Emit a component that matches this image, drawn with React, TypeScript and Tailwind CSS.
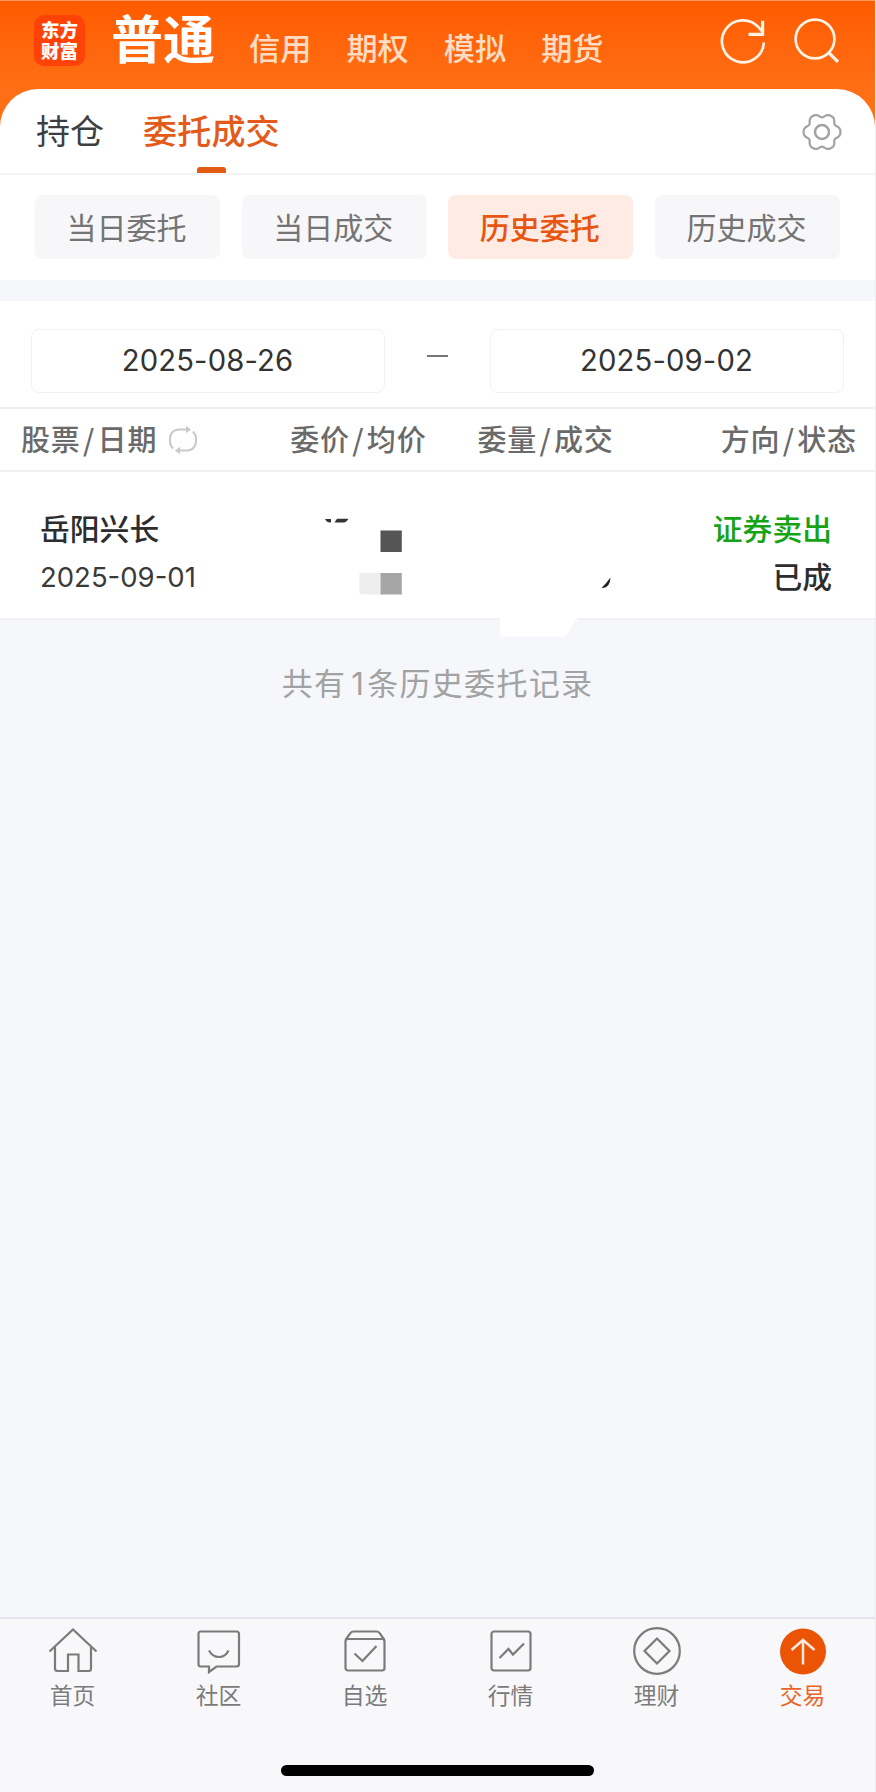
import React from "react";

const markets = ["信用", "期权", "模拟", "期货"];
const filters = ["当日委托", "当日成交", "历史委托", "历史成交"];

function RefreshIcon() {
  return (
    <svg className="h-12 w-12" viewBox="0 0 48 48" fill="none" stroke="#fff3e6" strokeWidth="2.7">
      <path d="M44.9 25.5A21 21 0 1 1 39.500 10.200L43.500 15" />
      <path d="M43.600 3.800v13.500H29.500" strokeWidth="3.200" />
    </svg>
  );
}

function SearchIcon() {
  return (
    <svg className="h-12 w-12" viewBox="0 0 48 48" fill="none" stroke="#fff3e6" strokeWidth="2.7">
      <circle cx="22" cy="22" r="19.400" />
      <path d="M35.500 35.500l9.500 9.300" strokeWidth="3.200" />
    </svg>
  );
}

// Six-lobed outline traced in polar coordinates around (20, 20).
const gearPoints = Array.from({ length: 144 }, (_, i) => {
  const t = (i / 144) * Math.PI * 2;
  const w = Math.cos(6 * t);
  const r = 16.9 + 1.9 * w - 0.35 * Math.cos(12 * t);
  return `${(20 + r * Math.cos(t)).toFixed(2)},${(20 + r * Math.sin(t)).toFixed(2)}`;
}).join(" ");

function GearIcon() {
  return (
    <svg className="h-10 w-10" viewBox="0 0 40 40" fill="none" stroke="#a3a3a3" strokeWidth="2.200" strokeLinejoin="round">
      <polygon points={gearPoints} />
      <circle cx="20" cy="20" r="7" strokeWidth="2.500" />
    </svg>
  );
}

function SwapIcon() {
  return (
    <svg className="h-[30px] w-[30px]" viewBox="0 0 30 30" fill="none" stroke="#c9c9c9" strokeWidth="2.100">
      <path d="M5 23.500Q2 20.500 2 17V13Q3 5 10.500 4.500H19" />
      <path d="M25 6.500Q28 9.500 28 13V17Q27 25 19.500 25.500H11" />
      <path d="M18 .8l5 3.700L18 8.200zM12 21.800l-5 3.700 5 3.700z" fill="#c9c9c9" stroke="none" />
    </svg>
  );
}

const navIcons: Record<string, React.ReactNode> = {
  首页: (
    <>
      <path d="M1.500 25.500L25 3.500l23.500 22" />
      <path d="M7 21v21.500q0 2.500 2.500 2.500H20V28.500h10.500V45H41q2 0 2-2.500V21" />
    </>
  ),
  社区: (
    <path d="M6.500 5.500h36q2.500 0 2.500 2.500v30q0 2.500-2.500 2.500H22.500l-7.500 5.500v-5.500H6.500Q4.500 40.500 4.500 38V8q0-2.500 2-2.500zM15 24.500q3.500 6.500 10 6.500t9.500-6.500" />
  ),
  自选: (
    <>
      <rect x="5.500" y="13" width="39" height="31.500" rx="2.500" />
      <path d="M5.500 14l5-7q1-1.500 3-1.500h23q2 0 3 1.500l5 7M14.500 27.500l8 7.500L36.500 20" />
    </>
  ),
  行情: (
    <>
      <rect x="5.500" y="5.500" width="39" height="39" rx="2.500" />
      <path d="M13.500 32l9-9 4.500 5.500L38 17.500" />
    </>
  ),
  理财: (
    <>
      <circle cx="25" cy="25" r="22.800" />
      <path d="M25 12.500L37.500 25 25 37.500 12.500 25z" />
    </>
  ),
  交易: (
    <>
      <circle cx="25" cy="25.500" r="23" fill="#ea5404" stroke="none" />
      <path d="M25 38.500V14M13.500 24L25 14l11.500 10" stroke="#ffe9dc" strokeWidth="2.500" />
    </>
  ),
};

function HeadLabel({ a, b }: { a: string; b: string }) {
  return (
    <span className="flex tracking-[0.800px]">
      <span>{a}</span>
      <span className="w-[17px] text-center">/</span>
      <span>{b}</span>
    </span>
  );
}

function DateBox({ value }: { value: string }) {
  return (
    <div className="flex h-[64px] w-[354px] items-center justify-center rounded-[8px] border-[1.500px] border-[#f2f2f3] pr-[1px] font-[Inter,sans-serif] text-[29.200px] tracking-[0.150px] text-[#333]">
      {value}
    </div>
  );
}

export default function App() {
  return (
    <div className="flex h-[1792px] w-[876px] flex-col overflow-hidden border-r border-[#efeff1] bg-[#f6f7fb] font-['Noto_Sans_CJK_SC',sans-serif]">
      <header className="flex h-[130px] shrink-0 items-start border-t border-[#ff9a5c] bg-linear-to-b from-[#ff5b00] from-0% to-[#ff6f15] to-70% pl-[34px]">
        <div className="mt-[14px] flex h-[51px] w-[51px] flex-col items-center justify-center rounded-[10px] bg-[#ff4208] pb-[1px] text-[18.500px] leading-[21px] font-black text-white">
          <span className="block h-[21px]">东方</span>
          <span className="block h-[21px]">财富</span>
        </div>
        <div className="ml-[26px] flex h-[72px] w-[105px] items-center text-[52px] leading-none font-bold text-white">普通</div>
        <nav className="ml-[33px] flex h-[92px] items-center gap-[35px] text-[31.200px] leading-none font-medium text-[#ffdcc2]">
          {markets.map((m) => (
            <span key={m}>{m}</span>
          ))}
        </nav>
        <div className="mt-[16px] ml-[115px] flex gap-[26px]">
          <RefreshIcon />
          <SearchIcon />
        </div>
      </header>

      <section className="relative -mt-[41px] h-[191px] shrink-0 rounded-t-[38px] bg-white">
        <div className="flex h-[86px] items-center border-b-2 border-[#f4f4f5] pr-[33px] pl-[36px] text-[34px] leading-none">
          <span className="-mt-[2px] text-[#3c3f42]">持仓</span>
          <div className="relative ml-[39px] flex h-full items-center pb-[2px] font-medium tracking-[0.200px] text-[#e35a1b]">
            委托成交
            <span className="absolute bottom-0 left-[54px] h-[6px] w-[29px] rounded-t-[3px] bg-[#e35a13]" />
          </div>
          <span className="mt-[2px] ml-auto">
            <GearIcon />
          </span>
        </div>
        <div className="mt-[20px] flex justify-between pr-[35px] pl-[35px]">
          {filters.map((f) => (
            <button
              key={f}
              className={
                f === "历史委托"
                  ? "h-[64px] w-[185px] rounded-[8px] bg-[#feece4] pr-[2px] pb-[3px] text-[30px] leading-none font-medium text-[#e85510]"
                  : "h-[64px] w-[185px] rounded-[8px] bg-[#f7f7fa] pr-[2px] pb-[3px] text-[30px] leading-none text-[#747474]"
              }
            >
              {f}
            </button>
          ))}
        </div>
      </section>

      <section className="mt-[21px] flex h-[108px] shrink-0 justify-between border-b-2 border-[#efeff0] bg-white pt-[28px] pr-[31px] pl-[31px]">
        <DateBox value="2025-08-26" />
        <span className="mt-[26px] h-[2px] w-[21px] bg-[#777]" />
        <DateBox value="2025-09-02" />
      </section>

      <section className="flex h-[63px] shrink-0 items-center border-b-2 border-[#f0f0f1] bg-white pb-[2px] pl-[21px] text-[29px] leading-none font-medium text-[#6a6a6a]">
        <HeadLabel a="股票" b="日期" />
        <span className="mt-[2px] ml-[11px]">
          <SwapIcon />
        </span>
        <span className="ml-[92px]">
          <HeadLabel a="委价" b="均价" />
        </span>
        <span className="ml-[51px]">
          <HeadLabel a="委量" b="成交" />
        </span>
        <span className="ml-[107px]">
          <HeadLabel a="方向" b="状态" />
        </span>
      </section>

      <section className="relative flex h-[148px] shrink-0 justify-between border-b-2 border-[#f1f1f3] bg-white pt-[31px] pr-[43px] pl-[40px] text-[29.800px] font-medium text-[#2d2d2d]">
        <div className="flex flex-col">
          <span className="leading-[48px]">岳阳兴长</span>
          <span className="pt-[2px] font-[Inter,sans-serif] text-[27.500px] leading-[48px] font-normal text-[#3a3a3a]">2025-09-01</span>
        </div>
        <div className="flex flex-col text-right">
          <span className="leading-[48px] text-[#16a316]">证券卖出</span>
          <span className="leading-[48px]">已成</span>
        </div>
        <svg className="absolute top-[28px] left-[320px] h-[140px] w-[300px]" viewBox="320 500 300 140">
          <path d="M325 519h6v3.500q-4 .5-6-3.500zM337 518.800h11.500q-2 3.700-5 3.700h-9z" fill="#333" />
          <rect x="380.500" y="530.500" width="21.300" height="21.500" fill="#555" />
          <path d="M359.500 573h21v21.500h-18q-3 0-3-3z" fill="#eee" />
          <rect x="380.500" y="573" width="21.300" height="21.500" fill="#a6a6a6" />
          <path d="M601.500 588q5-5 9-10.500-.5 9-6.500 10.300z" fill="#222" />
          <path d="M500 617h78.500l-11 16q-2 3.500-6 3.500h-58q-3.500 0-3.500-4z" fill="#fff" />
        </svg>
      </section>

      <main className="flex-1 pt-[42px] text-center text-[31px] leading-[40px] tracking-[1.300px] text-[#a2a2a2]">
        共有<span className="mr-[2px] ml-[5px] font-[Inter,sans-serif]">1</span>条历史委托记录
      </main>

      <footer className="flex h-[175px] shrink-0 flex-col border-t-2 border-[#e5e4ee] bg-[#f8f8fb]">
        <nav className="-mr-px grid grid-cols-6">
          {Object.entries(navIcons).map(([label, icon]) => (
            <div
              key={label}
              className={
                label === "交易"
                  ? "flex flex-col items-center pr-[1px] text-[22.800px] leading-[30px] text-[#ea6426]"
                  : "flex flex-col items-center pr-[1px] text-[22.800px] leading-[30px] text-[#7b7b7b]"
              }
            >
              <svg className="mt-[7px] mb-[4px] h-[50px] w-[50px]" viewBox="0 0 50 50" fill="none" stroke="#7b7b7b" strokeWidth="2.200">
                {icon}
              </svg>
              {label}
            </div>
          ))}
        </nav>
        <div className="mx-auto mt-[55px] h-[11px] w-[313px] rounded-full bg-black" />
      </footer>
    </div>
  );
}
